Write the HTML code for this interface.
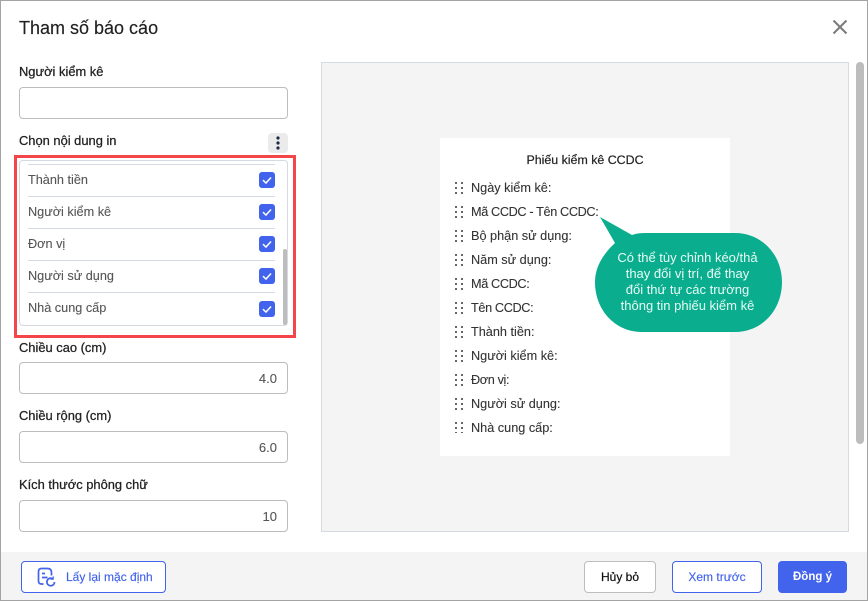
<!DOCTYPE html>
<html><head><meta charset="utf-8">
<style>
html,body{margin:0;padding:0;background:#fff}
#r{position:relative;width:868px;height:601px;overflow:hidden;background:#fff;font-family:"Liberation Sans",sans-serif;color:#212121}
#r div,#r svg{position:absolute;box-sizing:border-box}
.t{white-space:nowrap;line-height:16px;height:16px}
.lb{left:19px;font-size:12.9px;color:#212121;-webkit-text-stroke:.25px #212121}
.in{left:19px;width:269px;height:32px;border:1px solid #bdbdbd;border-radius:4px;background:#fff}
.val{right:591px;font-size:13px;color:#555;-webkit-text-stroke:.1px #555}
.sep{left:28px;width:247px;height:1px;background:#d4d9e2}
.it{left:28px;font-size:12.7px;color:#555;-webkit-text-stroke:.1px #555}
.cb{left:259px;width:16px;height:16px;background:#4263eb;border-radius:3px}
.p{left:471px;font-size:12.7px;color:#333;-webkit-text-stroke:.1px #333}
.p.c{letter-spacing:-.37px}
.btn{top:561px;height:32px;border-radius:4px;font-size:12px;text-align:center;line-height:30px;font-weight:400}
</style></head><body>
<div id="r">
<div style="left:0;top:552px;width:868px;height:49px;background:#f4f4f4"></div>
<div class="t" style="left:19px;top:18px;font-size:18px;line-height:20px;height:20px;color:#212121;-webkit-text-stroke:.15px #212121">Tham số báo cáo</div>
<svg style="left:832px;top:19px" width="16" height="16" viewBox="0 0 16 16"><path d="M1.5 1.5L14.5 14.5M14.5 1.5L1.5 14.5" stroke="#7a7a7a" stroke-width="2" fill="none"/></svg>

<div class="t lb" style="top:64px">Người kiểm kê</div>
<div class="in" style="top:87px"></div>
<div class="t lb" style="top:133px">Chọn nội dung in</div>
<div style="left:268px;top:133px;width:20px;height:20px;background:#ebebeb;border-radius:4px"></div>
<svg style="left:268px;top:133px" width="20" height="20"><circle cx="10" cy="5" r="1.6" fill="#1f2a44"/><circle cx="10" cy="10" r="1.6" fill="#1f2a44"/><circle cx="10" cy="15" r="1.6" fill="#1f2a44"/></svg>

<div style="left:19px;top:160px;width:269px;height:166px;border:1px solid #d4d9e2;border-radius:4px"></div>
<div class="sep" style="top:164px"></div>
<div class="sep" style="top:196px"></div>
<div class="sep" style="top:228px"></div>
<div class="sep" style="top:260px"></div>
<div class="sep" style="top:292px"></div>
<div class="t it" style="top:172px">Thành tiền</div>
<div class="t it" style="top:204px">Người kiểm kê</div>
<div class="t it" style="top:236px">Đơn vị</div>
<div class="t it" style="top:268px">Người sử dụng</div>
<div class="t it" style="top:300px">Nhà cung cấp</div>
<div class="cb" style="top:172px"></div><div class="cb" style="top:204px"></div><div class="cb" style="top:236px"></div><div class="cb" style="top:268px"></div><div class="cb" style="top:301px"></div>
<svg style="left:259px;top:172px" width="16" height="16"><path d="M4 8.2L7 11L12 5.5" stroke="#fff" stroke-width="1.5" fill="none"/></svg>
<svg style="left:259px;top:204px" width="16" height="16"><path d="M4 8.2L7 11L12 5.5" stroke="#fff" stroke-width="1.5" fill="none"/></svg>
<svg style="left:259px;top:236px" width="16" height="16"><path d="M4 8.2L7 11L12 5.5" stroke="#fff" stroke-width="1.5" fill="none"/></svg>
<svg style="left:259px;top:268px" width="16" height="16"><path d="M4 8.2L7 11L12 5.5" stroke="#fff" stroke-width="1.5" fill="none"/></svg>
<svg style="left:259px;top:301px" width="16" height="16"><path d="M4 8.2L7 11L12 5.5" stroke="#fff" stroke-width="1.5" fill="none"/></svg>
<div style="left:283px;top:249px;width:4px;height:76px;background:#bdbdbd;border-radius:2px"></div>
<div style="left:14px;top:155px;width:282px;height:183px;border:3px solid #f44649"></div>

<div class="t lb" style="top:340px">Chiều cao (cm)</div>
<div class="in" style="top:362px"></div>
<div class="t val" style="top:371px">4.0</div>
<div class="t lb" style="top:408px">Chiều rộng (cm)</div>
<div class="in" style="top:431px"></div>
<div class="t val" style="top:440px">6.0</div>
<div class="t lb" style="top:477px">Kích thước phông chữ</div>
<div class="in" style="top:500px"></div>
<div class="t val" style="top:509px">10</div>

<div style="left:321px;top:62px;width:528px;height:470px;background:#f4f4f4;border:1px solid #d4d9e2"></div>
<div style="left:440px;top:138px;width:290px;height:318px;background:#fff"></div>
<div class="t" style="left:440px;width:290px;text-align:center;top:152px;font-size:12.4px;color:#222;-webkit-text-stroke:.2px #222">Phiếu kiểm kê CCDC</div>

<svg style="left:455px;top:181px" width="9" height="252" fill="#666">
<defs><g id="d"><rect x="0" y="0" width="2" height="2"/><rect x="6" y="0" width="2" height="2"/><rect x="0" y="5" width="2" height="2"/><rect x="6" y="5" width="2" height="2"/><rect x="0" y="10" width="2" height="2"/><rect x="6" y="10" width="2" height="2"/></g></defs>
<use href="#d" y="1"/><use href="#d" y="25"/><use href="#d" y="49"/><use href="#d" y="73"/><use href="#d" y="97"/><use href="#d" y="121"/><use href="#d" y="145"/><use href="#d" y="169"/><use href="#d" y="193"/><use href="#d" y="217"/><use href="#d" y="241"/>
</svg>
<div class="t p" style="top:180px">Ngày kiểm kê:</div>
<div class="t p c" style="top:204px">Mã CCDC - Tên CCDC:</div>
<div class="t p" style="top:228px">Bộ phận sử dụng:</div>
<div class="t p" style="top:252px">Năm sử dụng:</div>
<div class="t p c" style="top:276px">Mã CCDC:</div>
<div class="t p c" style="top:300px">Tên CCDC:</div>
<div class="t p" style="top:324px">Thành tiền:</div>
<div class="t p" style="top:348px">Người kiểm kê:</div>
<div class="t p c" style="top:372px">Đơn vị:</div>
<div class="t p" style="top:396px">Người sử dụng:</div>
<div class="t p" style="top:420px">Nhà cung cấp:</div>

<svg style="left:590px;top:210px" width="200" height="130"><path d="M10 7L42 25Q47 23 55 23H145C172 23 192 45 192 72C192 100 172 122 145 122H52C25 122 5 100 5 72C5 58 12 45 25 33Z" fill="#0aae8e"/></svg>
<div style="left:594px;top:250px;width:187px;text-align:center;color:#e8fbf6;font-size:13px;line-height:16px">Có thể tùy chỉnh kéo/thả<br>thay đổi vị trí, để thay<br>đổi thứ tự các trường<br>thông tin phiếu kiểm kê</div>

<div style="left:856px;top:62px;width:8px;height:382px;background:#bdbdbd;border-radius:4px"></div>

<div class="btn" style="left:21px;width:145px;background:#fff;border:1px solid #4263eb"></div>
<svg style="left:37px;top:567px" width="20" height="20" viewBox="0 0 20 20" fill="none" stroke="#4263eb" stroke-width="1.7"><path d="M6.5 17H4.5Q1.5 17 1.5 14V4.5Q1.5 1.5 4.5 1.5H10.5Q14.5 1.5 14.5 5.5V8.5"/><path d="M5 6.5H8M5 10.5H10.5"/><path d="M17.5 15A3.8 3.8 0 1 1 15.8 11.8"/><path d="M16.2 9.4V12.2H13.4" stroke-width="1.2"/></svg>
<div class="t" style="left:66px;top:569px;font-size:12px;color:#4263eb;-webkit-text-stroke:.15px #4263eb">Lấy lại mặc định</div>
<div class="btn" style="left:584px;width:72px;background:#fff;border:1px solid #bdbdbd;color:#111;-webkit-text-stroke:.2px #111">Hủy bỏ</div>
<div class="btn" style="left:672px;width:90px;background:#fff;border:1px solid #4263eb;color:#4263eb;-webkit-text-stroke:.15px #4263eb">Xem trước</div>
<div class="btn" style="left:778px;width:69px;background:#4263eb;color:#fff;line-height:33px;font-weight:700;font-size:11.5px">Đồng ý</div>

<div style="left:0;top:0;width:868px;height:601px;border:1px solid #a3a3a3"></div>
</div>
</body></html>
